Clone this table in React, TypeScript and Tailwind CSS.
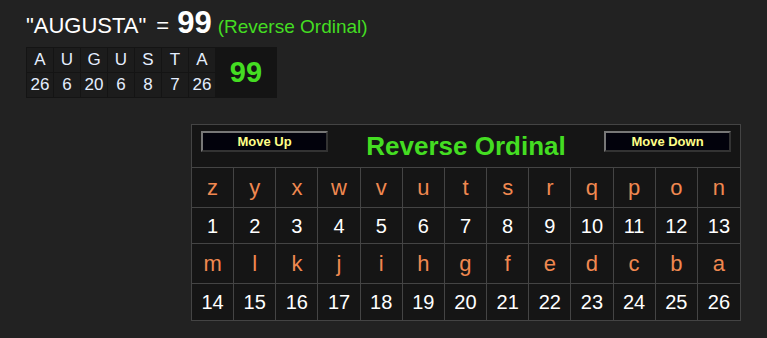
const letters = 'AUGUSTA'.split('');
const values = [26, 6, 20, 6, 8, 7, 26];

const rows = [
  { chars: 'zyxwvutsrqpon'.split(''), start: 1 },
  { chars: 'mlkjihgfedcba'.split(''), start: 14 },
];

function MoveButton({ label }: { label: string }) {
  return (
    <button className="self-start mt-[6px] w-[127px] h-[21px] bg-[#02020c] border-2 border-t-[#777] border-l-[#777] border-b-[#333] border-r-[#333] text-[#ffff88] text-[13px] font-bold leading-none">
      {label}
    </button>
  );
}

export default function App() {
  return (
    <div className="w-[767px] h-[338px] bg-[#222222] font-['Liberation_Sans',Arial,sans-serif] text-white overflow-hidden">
      {/* Heading */}
      <div className="pl-[26px] pt-[8px] h-[47px] flex items-baseline leading-[30px]">
        <span className="text-[22px]">"AUGUSTA"</span>
        <span className="text-[22px] ml-[10px]">=</span>
        <span className="text-[31px] font-bold ml-[8px]">99</span>
        <span className="text-[19px] text-[#44dd22] ml-[6px]">(Reverse Ordinal)</span>
      </div>

      {/* Word breakdown */}
      <div className="ml-[26px] inline-flex align-top bg-[#141414] p-px gap-px">
        {letters.map((l, i) => (
          <div key={i} className="flex flex-col gap-px">
            <div className="w-[26px] h-[24px] bg-[#1c1c1c] flex items-center justify-center text-[17px] text-[#e4eeff]">
              {l}
            </div>
            <div className="w-[26px] h-[24px] bg-[#1c1c1c] flex items-center justify-center text-[17px] text-[#e4eeff]">
              {values[i]}
            </div>
          </div>
        ))}
        <div className="w-[60px] bg-[#141414] flex items-center justify-center text-[29px] font-bold text-[#44dd22]">
          99
        </div>
      </div>

      {/* Cipher chart */}
      <div className="ml-[191px] mt-[26px] w-[550px] border border-[#444] bg-[#151515]">
        <div className="h-[43px] flex items-center justify-between px-[9px] border-b border-[#444]">
          <MoveButton label="Move Up" />
          <span className="text-[26px] font-bold text-[#44dd22] leading-none">Reverse Ordinal</span>
          <MoveButton label="Move Down" />
        </div>
        {rows.map((row, r) => (
          <div key={r}>
            <div className="grid grid-cols-13 h-[40px] border-b border-[#444]">
              {row.chars.map((c, i) => (
                <div
                  key={c}
                  className={`flex items-center justify-center text-[22px] text-[#f08850] ${i < 12 ? 'border-r border-[#444]' : ''}`}
                >
                  {c}
                </div>
              ))}
            </div>
            <div className={`grid grid-cols-13 h-[36px] ${r === 0 ? 'border-b border-[#444]' : ''}`}>
              {row.chars.map((c, i) => (
                <div
                  key={c}
                  className={`flex items-center justify-center text-[20px] text-white ${i < 12 ? 'border-r border-[#444]' : ''}`}
                >
                  {row.start + i}
                </div>
              ))}
            </div>
          </div>
        ))}
      </div>
    </div>
  );
}
